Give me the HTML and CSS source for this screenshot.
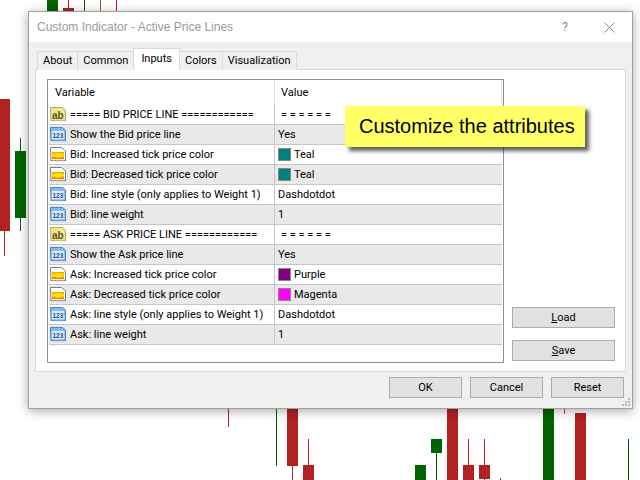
FILE: index.html
```html
<!DOCTYPE HTML>
<html>
  <head>
  <meta charset="utf-8" />
  <title>Custom Indicator - Active Price Lines</title>
  <link rel="stylesheet" href="styles.css">
  </head>
  <body>
    <!-- chart behind the dialog -->
    <div class="chart">
      <i class="c red" style="left:0;top:99px;width:10px;height:132px"></i>
      <i class="c red" style="left:4px;top:231px;width:1px;height:25px"></i>
      <i class="c green" style="left:15px;top:151px;width:11px;height:67px"></i>
      <i class="c green" style="left:20px;top:138px;width:1px;height:93px"></i>
      <i class="c green" style="left:47px;top:0;width:11px;height:12px"></i>
      <i class="c red" style="left:63px;top:8px;width:11px;height:4px"></i>
      <i class="c red" style="left:68px;top:0;width:1px;height:8px"></i>
      <i class="c green" style="left:84px;top:0;width:1px;height:12px"></i>
      <i class="c brown" style="left:100px;top:0;width:1px;height:12px"></i>
      <i class="c red" style="left:116px;top:0;width:1px;height:12px"></i>
      <i class="c red" style="left:228px;top:408px;width:1px;height:19px"></i>
      <i class="c green" style="left:276px;top:408px;width:1px;height:58px"></i>
      <i class="c red" style="left:287px;top:408px;width:11px;height:58px"></i>
      <i class="c red" style="left:292px;top:466px;width:1px;height:14px"></i>
      <i class="c red" style="left:303px;top:465px;width:11px;height:15px"></i>
      <i class="c red" style="left:308px;top:439px;width:1px;height:26px"></i>
      <i class="c green" style="left:415px;top:465px;width:11px;height:15px"></i>
      <i class="c green" style="left:431px;top:439px;width:11px;height:14px"></i>
      <i class="c green" style="left:436px;top:453px;width:1px;height:27px"></i>
      <i class="c red" style="left:447px;top:408px;width:11px;height:72px"></i>
      <i class="c red" style="left:463px;top:465px;width:11px;height:15px"></i>
      <i class="c red" style="left:468px;top:439px;width:1px;height:26px"></i>
      <i class="c red" style="left:479px;top:465px;width:11px;height:14px"></i>
      <i class="c red" style="left:484px;top:439px;width:1px;height:41px"></i>
      <i class="c red" style="left:500px;top:478px;width:1px;height:2px"></i>
      <i class="c green" style="left:543px;top:408px;width:11px;height:72px"></i>
      <i class="c brown" style="left:564px;top:408px;width:1px;height:6px"></i>
      <i class="c red" style="left:575px;top:413px;width:11px;height:67px"></i>
      <i class="c green" style="left:628px;top:439px;width:1px;height:41px"></i>
    </div>

    <svg class="defs" width="0" height="0">
      <defs>
        <linearGradient id="blue" x1="0" y1="0" x2="0" y2="1">
          <stop offset="0" stop-color="#7fb6ea"/>
          <stop offset="1" stop-color="#a8d0f4"/>
        </linearGradient>
        <linearGradient id="fire" x1="0" y1="0" x2="0" y2="1">
          <stop offset="0" stop-color="#ff9a00"/>
          <stop offset=".5" stop-color="#ffe800"/>
          <stop offset="1" stop-color="#f06a00"/>
        </linearGradient>
      </defs>
      <symbol id="ico-ab" viewBox="0 0 16 16">
        <path d="M.5.500h12l3 2.500v11l-1.500-1-1.500 1-1.500-1-1.500 1-1.500-1-1.500 1-1.500-1-1.500 1-1.500-1-1 1z" fill="#f3e690" stroke="#b5a65c"/>
      </symbol>
      <symbol id="ico-num" viewBox="0 0 16 16">
        <path d="M.5.500h12l3 2.500v11l-1.500-1-1.500 1-1.500-1-1.500 1-1.500-1-1.500 1-1.500-1-1.500 1-1.500-1-1 1z" fill="url(#blue)" stroke="#4a86c0"/>
        <rect x="2" y="4" width="12" height="8" fill="#d8ebfb"/>
      </symbol>
      <symbol id="ico-color" viewBox="0 0 16 16">
        <path d="M.5.500h11l4 3.500v10l-1.500-1-1.500 1-1.500-1-1.500 1-1.500-1-1.500 1-1.500-1-1.500 1-1.500-1-1 1z" fill="#fff" stroke="#7c7c7c"/>
        <rect x="2" y="5" width="12" height="7" fill="url(#fire)"/>
        <rect x="6" y="6.500" width="5" height="4" fill="#ffee00"/>
      </symbol>
    </svg>

    <div class="dialog">
      <div class="titlebar">
        <span class="title">Custom Indicator - Active Price Lines</span>
        <span class="help">?</span>
        <svg class="close" width="11" height="11" viewBox="0 0 11 11"><path d="M.5.500l10 10M10.500.500l-10 10" stroke="#8a8a8a" fill="none"/></svg>
      </div>

      <div class="body">
        <ul class="tabs">
          <li>About</li>
          <li>Common</li>
          <li class="active">Inputs</li>
          <li>Colors</li>
          <li>Visualization</li>
        </ul>

        <div class="panel">
          <div class="listbox">
            <div class="row head">
              <div class="var">Variable</div>
              <div class="val">Value</div>
            </div>
            <div class="row plain">
              <div class="var"><svg class="ico"><use href="#ico-ab"/><text x="2" y="12" class="ab">ab</text></svg>===== BID PRICE LINE ============</div>
              <div class="val sep">= = = = = =</div>
            </div>
            <div class="row">
              <div class="var"><svg class="ico"><use href="#ico-num"/><text x="2.500" y="11" class="num">123</text></svg>Show the Bid price line</div>
              <div class="val">Yes</div>
            </div>
            <div class="row plain">
              <div class="var"><svg class="ico"><use href="#ico-color"/></svg>Bid: Increased tick price color</div>
              <div class="val"><span class="swatch teal"></span>Teal</div>
            </div>
            <div class="row">
              <div class="var"><svg class="ico"><use href="#ico-color"/></svg>Bid: Decreased tick price color</div>
              <div class="val"><span class="swatch teal"></span>Teal</div>
            </div>
            <div class="row plain">
              <div class="var"><svg class="ico"><use href="#ico-num"/><text x="2.500" y="11" class="num">123</text></svg>Bid: line style (only applies to Weight 1)</div>
              <div class="val">Dashdotdot</div>
            </div>
            <div class="row">
              <div class="var"><svg class="ico"><use href="#ico-num"/><text x="2.500" y="11" class="num">123</text></svg>Bid: line weight</div>
              <div class="val">1</div>
            </div>
            <div class="row plain">
              <div class="var"><svg class="ico"><use href="#ico-ab"/><text x="2" y="12" class="ab">ab</text></svg>===== ASK PRICE LINE ============</div>
              <div class="val sep">= = = = = =</div>
            </div>
            <div class="row">
              <div class="var"><svg class="ico"><use href="#ico-num"/><text x="2.500" y="11" class="num">123</text></svg>Show the Ask price line</div>
              <div class="val">Yes</div>
            </div>
            <div class="row plain">
              <div class="var"><svg class="ico"><use href="#ico-color"/></svg>Ask: Increased tick price color</div>
              <div class="val"><span class="swatch purple"></span>Purple</div>
            </div>
            <div class="row">
              <div class="var"><svg class="ico"><use href="#ico-color"/></svg>Ask: Decreased tick price color</div>
              <div class="val"><span class="swatch magenta"></span>Magenta</div>
            </div>
            <div class="row plain">
              <div class="var"><svg class="ico"><use href="#ico-num"/><text x="2.500" y="11" class="num">123</text></svg>Ask: line style (only applies to Weight 1)</div>
              <div class="val">Dashdotdot</div>
            </div>
            <div class="row">
              <div class="var"><svg class="ico"><use href="#ico-num"/><text x="2.500" y="11" class="num">123</text></svg>Ask: line weight</div>
              <div class="val">1</div>
            </div>
          </div>

          <div class="side">
            <button class="btn side-btn"><u>L</u>oad</button>
            <button class="btn side-btn"><u>S</u>ave</button>
          </div>
        </div>

        <div class="footer">
          <button class="btn foot-btn">OK</button>
          <button class="btn foot-btn">Cancel</button>
          <button class="btn foot-btn">Reset</button>
        </div>

        <svg class="grip" width="8" height="8" viewBox="0 0 8 8">
          <path d="M6 0h2v2H6zM3 3h2v2H3zM6 3h2v2H6zM0 6h2v2H0zM3 6h2v2H3zM6 6h2v2H6z" fill="#b8b8b8"/>
        </svg>
      </div>
    </div>

    <div class="callout">Customize the attributes</div>
  </body>
</html>
```

FILE: styles.css
```css
html, body {
  margin: 0;
  height: 100%;
  background: #fff;
  overflow: hidden;
}
body {
  font-family: Roboto, "Liberation Sans", Arial, sans-serif;
  font-size: 11px;
  color: #000;
}
.chart {
  position: absolute;
  left: 0;
  top: 0;
  width: 640px;
  height: 480px;
}
.c { position: absolute; display: block; }
.red { background: #b22222; }
.green { background: #006400; }
.brown { background: #a0522d; }
.defs { position: absolute; }

.dialog {
  position: absolute;
  left: 28px;
  top: 11px;
  width: 603px;
  height: 396px;
  border: 1px solid #a0a0a0;
  box-shadow: 0 2px 10px rgba(0, 0, 0, .35);
  background: #f0f0f0;
  display: flex;
  flex-direction: column;
}
.titlebar {
  height: 30px;
  background: #fff;
  display: flex;
  align-items: center;
  padding: 0 17px 0 8px;
  flex: none;
}
.title {
  flex: 1;
  font-family: "Liberation Sans", Arial, sans-serif;
  font-size: 12px;
  color: #9a9a9a;
}
.help {
  color: #8a8a8a;
  font-size: 12px;
  margin-right: 36px;
}
.body {
  flex: 1;
  display: flex;
  flex-direction: column;
  padding: 8px 6px 0 6px;
  position: relative;
}
.tabs {
  display: flex;
  list-style: none;
  margin: 0 0 0 2px;
  padding: 0;
  height: 19px;
  position: relative;
  z-index: 1;
}
.tabs li {
  height: 18px;
  margin-top: 1px;
  line-height: 18px;
  padding: 0 5px;
  background: #f0f0f0;
  border: 1px solid #d9d9d9;
  border-bottom: none;
  margin-right: -1px;
}
.tabs li.active {
  height: 21px;
  margin-top: -2px;
  line-height: 19px;
  padding: 0 7px;
  background: #fff;
  position: relative;
}
.panel {
  height: 303px;
  background: #fff;
  border: 1px solid #d9d9d9;
  box-sizing: border-box;
  padding: 9px 10px 9px 11px;
  display: flex;
  gap: 8px;
}
.listbox {
  width: 457px;
  height: 284px;
  box-sizing: border-box;
  border: 1px solid #8e8e98;
  background: #fff;
  flex: none;
  padding: 0 1px;
}
.row {
  display: flex;
  height: 20px;
  box-sizing: border-box;
  background: #e9e9e9;
  border-bottom: 1px solid #c6c6c6;
  line-height: 19px;
  white-space: nowrap;
}
.row.plain { background: #fff; }
.row.head {
  height: 25px;
  background: #fff;
  border-bottom: none;
  line-height: 25px;
}
.var {
  width: 226px;
  box-sizing: border-box;
  flex: none;
  display: flex;
  align-items: center;
  border-right: 1px solid #c6c6c6;
  padding-left: 1px;
}
.val {
  flex: 1;
  display: flex;
  align-items: center;
  padding-left: 3px;
}
.head .var { padding-left: 6px; border-right-color: #e4e4e4; }
.head .val { padding-left: 6px; border-right: 1px solid #e4e4e4; }
.val.sep { padding-left: 6px; }
.ico {
  width: 16px;
  height: 16px;
  margin-right: 4px;
  flex: none;
}
.ab {
  font: bold 10px "Liberation Sans", sans-serif;
  fill: #5c5320;
}
.num {
  font: bold 6.5px "Liberation Sans", sans-serif;
  fill: #1d4f86;
}
.swatch {
  width: 11px;
  height: 11px;
  border: 1px solid #8a8a8a;
  margin-right: 3px;
  flex: none;
}
.teal { background: #008080; }
.purple { background: #800080; }
.magenta { background: #ff00ff; }

.side {
  flex: 1;
  display: flex;
  flex-direction: column;
  justify-content: flex-end;
  gap: 12px;
  padding-bottom: 1px;
}
.btn {
  font: inherit;
  color: #000;
  background: #e1e1e1;
  border: 1px solid #adadad;
  border-radius: 0;
  padding: 0;
  height: 21px;
}
.side-btn { width: 103px; }
.footer {
  display: flex;
  justify-content: flex-end;
  gap: 8px;
  padding: 5px 2px 0 0;
}
.foot-btn { width: 73px; }
.grip {
  position: absolute;
  right: 2px;
  bottom: 2px;
}

.callout {
  position: absolute;
  left: 345px;
  top: 106px;
  width: 240px;
  height: 41px;
  box-sizing: border-box;
  padding-left: 14px;
  background: #ffff66;
  box-shadow: 4px 4px 4px rgba(40, 40, 40, .75);
  font-family: "Liberation Sans", Arial, sans-serif;
  font-size: 20px;
  line-height: 41px;
  white-space: nowrap;
}
```
